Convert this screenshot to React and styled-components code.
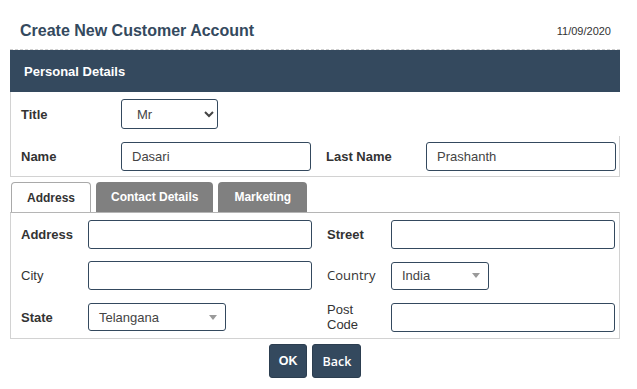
import React from 'react';
import styled, { createGlobalStyle } from 'styled-components';

const GlobalStyle = createGlobalStyle`
  body {
    margin: 0;
    background: #fff;
    font-family: "Liberation Sans", Arial, sans-serif;
    color: #333;
  }
`;

const Page = styled.div`
  width: 610px;
  padding: 0 17px 0 10px;
`;

const Header = styled.div`
  height: 49px;
  box-sizing: border-box;
  padding: 22px 9px 0 10px;
  display: flex;
  justify-content: space-between;
  align-items: flex-start;
`;

const Heading = styled.h1`
  margin: 0;
  font-size: 16px;
  line-height: 18px;
  font-weight: bold;
  color: #34495e;
`;

const DateText = styled.span`
  font-size: 11px;
  line-height: 18px;
  color: #333;
`;

const Section = styled.div`
  border-top: 1px dashed #cfcfcf;
`;

const SectionBar = styled.div`
  height: 42px;
  background: #34495e;
  color: #fff;
  font-size: 13px;
  font-weight: bold;
  padding-left: 14px;
  display: flex;
  align-items: center;
`;

const SectionBody = styled.div`
  border-left: 1px solid #d2d2d2;
  border-bottom: 1px solid #d2d2d2;
`;

const Row = styled.div`
  display: flex;
  align-items: center;
  height: ${({ $h }) => $h}px;
  padding-left: 10px;
  border-right: ${({ $edge }) => ($edge ? '1px solid #d2d2d2' : 'none')};
`;

const Label = styled.label`
  box-sizing: border-box;
  width: ${({ $w }) => ($w ? `${$w}px` : 'auto')};
  padding-left: ${({ $pl }) => $pl || 0}px;
  flex: none;
  font-size: 13px;
  line-height: 15px;
  font-weight: ${({ $bold }) => ($bold ? 'bold' : 'normal')};
  font-family: ${({ $open }) =>
    $open ? '"Open Sans", sans-serif' : '"Liberation Sans", Arial, sans-serif'};
  color: #333;
`;

const TextInput = styled.input`
  box-sizing: border-box;
  width: ${({ $w }) => $w}px;
  height: 29px;
  border: 1px solid #34495e;
  border-radius: 3px;
  padding: 0 10px;
  font-family: "Liberation Sans", Arial, sans-serif;
  font-size: 13px;
  color: #444;
  background: #fff;
  outline: none;
`;

const NativeSelect = styled.select`
  box-sizing: border-box;
  width: 97px;
  height: 30px;
  border: 1px solid #34495e;
  border-radius: 3px;
  padding: 0 6px 0 11px;
  font-family: "Liberation Sans", Arial, sans-serif;
  font-size: 13px;
  color: #444;
  background: #fff;
`;

const DropDown = styled.div`
  box-sizing: border-box;
  width: ${({ $w }) => $w}px;
  height: 28px;
  border: 1px solid #34495e;
  border-radius: 3px;
  padding: 0 8px 0 10px;
  display: flex;
  align-items: center;
  justify-content: space-between;
  font-size: 13px;
  color: #444;
`;

const Tabs = styled.div`
  display: flex;
  gap: 5px;
  margin: 5px 0 0 1px;
`;

const Tab = styled.div`
  box-sizing: border-box;
  height: 30px;
  padding: 0 ${({ $px }) => $px}px;
  display: flex;
  align-items: center;
  border-radius: 4px 4px 0 0;
  font-size: 12px;
  font-weight: bold;
  ${({ $active }) =>
    $active
      ? 'background: #fff; color: #333; border: 1px solid #a9a9a9; border-bottom: none;'
      : 'background: #808080; color: #fff;'}
`;

const TabPanel = styled.div`
  border: 1px solid #d2d2d2;
  border-top-color: #b5b5b5;
  padding: 7px 0 6px 10px;
`;

const FieldGrid = styled.div`
  display: grid;
  grid-template-columns: 67px 224px 79px 224px;
  row-gap: 12px;
  align-items: center;
`;

const Actions = styled.div`
  display: flex;
  justify-content: center;
  gap: 5px;
  margin-top: 5px;
`;

const Button = styled.button`
  height: 34px;
  padding: 0 9px;
  border: 1px solid #2c3e50;
  border-radius: 3px;
  background: #34495e;
  color: #fff;
  font-family: ${({ $open }) =>
    $open ? '"Open Sans", sans-serif' : '"Liberation Sans", Arial, sans-serif'};
  font-size: 12.5px;
  font-weight: ${({ $open }) => ($open ? 600 : 'bold')};
  cursor: pointer;
`;

const Caret = () => (
  <svg width="8" height="5" viewBox="0 0 8 5">
    <path d="M0 0h8L4 5z" fill="#9a9a9a" />
  </svg>
);

export default function App() {
  return (
    <>
      <GlobalStyle />
      <Page>
        <Header>
          <Heading>Create New Customer Account</Heading>
          <DateText>11/09/2020</DateText>
        </Header>

        <Section>
          <SectionBar>Personal Details</SectionBar>
          <SectionBody>
            <Row $h={44}>
              <Label $w={100} $bold>Title</Label>
              <NativeSelect defaultValue="Mr">
                <option>Mr</option>
                <option>Mrs</option>
                <option>Ms</option>
              </NativeSelect>
            </Row>
            <Row $h={40} $edge>
              <Label $w={100} $bold>Name</Label>
              <TextInput $w={190} defaultValue="Dasari" />
              <Label $w={115} $pl={15} $bold>Last Name</Label>
              <TextInput $w={190} defaultValue="Prashanth" />
            </Row>
          </SectionBody>
        </Section>

        <Tabs>
          <Tab $active $px={15}>Address</Tab>
          <Tab $px={15}>Contact Details</Tab>
          <Tab $px={16}>Marketing</Tab>
        </Tabs>

        <TabPanel>
          <FieldGrid>
            <Label $bold>Address</Label>
            <TextInput $w={224} />
            <Label $pl={15} $bold>Street</Label>
            <TextInput $w={224} />

            <Label>City</Label>
            <TextInput $w={224} />
            <Label $pl={15} $open>Country</Label>
            <DropDown $w={98}>
              <span>India</span>
              <Caret />
            </DropDown>

            <Label $bold>State</Label>
            <DropDown $w={138}>
              <span>Telangana</span>
              <Caret />
            </DropDown>
            <Label $pl={15}>
              Post
              <br />
              Code
            </Label>
            <TextInput $w={224} />
          </FieldGrid>
        </TabPanel>

        <Actions>
          <Button>OK</Button>
          <Button $open>Back</Button>
        </Actions>
      </Page>
    </>
  );
}
